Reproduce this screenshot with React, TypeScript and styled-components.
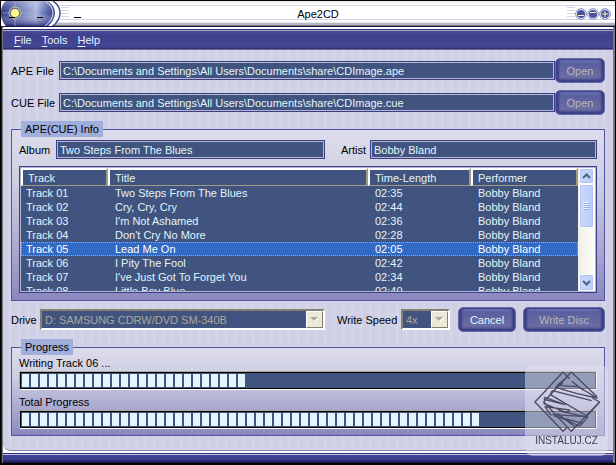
import React from "react";
import styled, { createGlobalStyle, css } from "styled-components";

const navy = "#3d3d8a";
const fieldBlue = "#40547f";
const paleText = "#e2f4fb";

const GlobalStyle = createGlobalStyle`
  * { box-sizing: border-box; }
  body { margin: 0; background: #000; }
  body, button, input, select, table {
    font-family: "Liberation Sans", Arial, sans-serif;
    font-size: 11px;
    line-height: 14px;
  }
`;

const Window = styled.div`
  min-height: 100vh;
  display: flex;
  flex-direction: column;
  border: solid #000;
  border-width: 1px 1px 2px;
  background: #17174f;
`;

const TitleBar = styled.header`
  display: grid;
  grid-template-columns: 1fr auto 1fr;
  align-items: center;
  height: 26px;
  border-bottom: 1px solid #17174f;
  background: linear-gradient(#eee 0 2px, #fff 2px 4px, #d5d5e6 4px 5px, #fff 5px 18px, #d5d5e6 18px 19px, #fff 19px 21px, #e4e4f0 21px 22px, #b8b8c0 22px 24px, #777 24px);
`;

const TitleLeft = styled.div`
  display: flex;
  align-items: center;
  height: 25px;
`;

const TitleText = styled.h1`
  margin: 0;
  padding-left: 20px;
  font-size: 11px;
  font-weight: 400;
  line-height: 14px;
  color: #000;
`;

const Grip = styled.div`
  width: 8px;
  height: 13px;
  background: repeating-linear-gradient(#d5d5e6 0 1px, #fff 1px 3px);
`;

const WindowButtons = styled.div`
  display: flex;
  justify-content: flex-end;
  align-items: center;
  padding-right: 4px;
`;

const WindowButton = styled.button`
  width: 12px;
  height: 12px;
  padding: 0;
  border: 0;
  background: none;
  svg { display: block; }
`;

const Frame = styled.div`
  flex: 1;
  display: flex;
  flex-direction: column;
  border: solid #777784;
  border-width: 0 2px 0 1px;
  margin-left: 1px;
  background: #fff;
`;

const MenuBar = styled.nav`
  display: flex;
  align-items: center;
  gap: 10px;
  height: 21px;
  margin-top: 2px;
  padding: 0 11px;
  border-top: 1px solid #2c2c7c;
  border-bottom: 1px solid #6a6a98;
  box-shadow: inset 0 1px #a7a7c4;
  background: linear-gradient(#4b4f9a, #40408c 5px, #434794 17px, #28286c);
`;

const MenuItem = styled.button`
  padding: 0;
  border: 0;
  background: none;
  color: #e4f2ff;
  u { text-underline-offset: 2px; }
`;

const Body = styled.main`
  flex: 1;
  display: flex;
  flex-direction: column;
  gap: 6px;
  padding: 8px 8px 14px;
  border-bottom: 1px solid #8a8aa8;
  border-radius: 0 0 0 8px;
  background: repeating-linear-gradient(90deg, #cfcfe5 0 4px, #d3d3e8 6px, #d7d7ea 8px, #cfcfe5 9px);
`;

const Paths = styled.div`
  display: flex;
  flex-direction: column;
  gap: 7px;
`;

const PathRow = styled.div`
  display: grid;
  grid-template-columns: 48px 1fr 50px;
  align-items: center;
`;

const Label = styled.label`
  white-space: nowrap;
  color: #000;
`;

const Field = styled.input`
  width: 100%;
  min-width: 0;
  height: 19px;
  padding: 0 3px;
  border: 1px solid ${navy};
  box-shadow: inset 0 0 0 1px #b5b5d0;
  background: ${fieldBlue};
  color: ${paleText};
  outline: 0;
`;

const PushButton = styled.button<{ $width: number }>`
  width: ${(p) => p.$width}px;
  height: 25px;
  padding: 0;
  border: 1px solid #6868a4;
  border-radius: 5px;
  color: ${paleText};
  background: linear-gradient(#7680bd, #5a5f9e 4px, #6b6da3 18px, #45478d);
  box-shadow: inset 3px 0 2px #3d4288, inset -3px 0 2px #3d4288, inset 0 -2px 2px #3c4088, inset 0 1px 1px #444a8c;
  &:disabled { color: #b8b8bc; }
`;

const Group = styled.fieldset<{ $top?: number }>`
  min-width: 0;
  margin: ${(p) => p.$top ?? 0}px 0 0;
  padding: 0 7px 7px;
  border: 1px solid #5254a2;
  background: linear-gradient(#dcdcea, #cfcfe4 30%, #a4a4ce 75%, #8888be);
`;

const Legend = styled.legend`
  height: 16px;
  margin-left: 2px;
  padding: 1px 4px;
  background: #a0aedb;
  color: #000;
`;

const InfoRow = styled.div`
  display: grid;
  grid-template-columns: 37px 269fr 45px 227fr;
  align-items: center;
  margin: 3px 0 7px;
  ${Label}:nth-of-type(2) { padding-left: 16px; }
`;

const List = styled.div`
  display: grid;
  grid-template-columns: 1fr 17px;
  height: 127px;
  border: 1px solid ${navy};
  background: ${fieldBlue};
  box-shadow: inset 0 0 0 1px #b5b5d0;
  padding: 1px;
`;

const Clip = styled.div`
  overflow: hidden;
`;

const Tracks = styled.table`
  width: 100%;
  table-layout: fixed;
  border-collapse: separate;
  border-spacing: 0;
  color: ${paleText};
  td { height: 14px; padding: 0 0 0 7px; line-height: 14px; }
  td:first-child { padding-left: 5px; }
`;

const Head = styled.th`
  height: 18px;
  padding: 0 0 0 5px;
  border: 2px solid;
  border-color: #fff #a09c84 #a09c84 #fff;
  border-bottom-width: 1px;
  text-align: left;
  font-weight: 400;
  line-height: 14px;
`;

const TrackRow = styled.tr<{ $selected: boolean }>`
  ${(p) => p.$selected && css`
    background: #316ac5;
    outline: 1px dotted #d6a83c;
    outline-offset: -1px;
    color: #fff;
  `}
`;

const ScrollTrack = styled.div`
  display: grid;
  grid-template-rows: 16px 44px 1fr 17px;
  padding: 0 1px;
  background: linear-gradient(90deg, #eeede5, #fefefb);
`;

const ScrollPart = styled.button`
  display: grid;
  place-items: center;
  padding: 0;
  border: 1px solid #fff;
  border-radius: 2px;
  background: linear-gradient(90deg, #cbd8fb, #b9ccf8);
  box-shadow: inset 0 0 0 1px #b3c5f0;
`;

const DriveRow = styled.div`
  display: grid;
  grid-template-columns: 29px 1fr 76px 49px auto;
  align-items: center;
`;

const SpeedLabel = styled(Label)`
  padding-left: 12px;
`;

const SelectBox = styled.div`
  display: grid;
  grid-template-columns: 1fr 17px;
  min-width: 0;
  height: 21px;
  border: 2px solid;
  border-color: #85816f #fff #fff #85816f;
  background: ${fieldBlue};
`;

const Select = styled.select`
  appearance: none;
  min-width: 0;
  padding: 0 3px;
  border: 0;
  background: transparent;
  &:disabled { color: #aca899; opacity: 1; }
`;

const SelectArrow = styled.span`
  display: grid;
  place-items: center;
  border: 1px solid;
  border-color: #fff #85816f #85816f #fff;
  background: #ece9d8;
`;

const Actions = styled.div`
  display: flex;
  gap: 7px;
  margin-left: 8px;
`;

const ProgressText = styled.div`
  height: 14px;
  margin: 1px 0 2px;
  color: #000;
  & ~ & { margin: 6px 0 2px; }
`;

const Bar = styled.div`
  display: flex;
  gap: 2px;
  height: 17px;
  padding: 1px;
  overflow: hidden;
  border: 1px solid #000;
  box-shadow: 0 -1px #aca899, -1px 0 #aca899, 0 1px #fff, 1px 0 #fff;
  margin: 0 1px;
  background: ${fieldBlue};
`;

const Chunk = styled.i`
  flex: 0 0 7px;
  background: #e4f4fd;
`;

const Footer = styled.footer`
  height: 12px;
  border-top: 2px solid #fff;
  background: linear-gradient(#2f2f80 0 1px, #c2c2dc 1px 2px, #42429a 2px, #3a3a8a 7px, #17174f 9px);
`;

const Watermark = styled.div`
  position: fixed;
  right: 8px;
  bottom: 9px;
  width: 83px;
  height: 91px;
  display: flex;
  flex-direction: column;
  align-items: center;
  border-radius: 8px;
  background: rgba(225, 225, 240, 0.52);
  font: 10px/14px "Liberation Sans", sans-serif;
  color: #3c3c50;
  svg { display: block; margin: 5px 0 1px; }
`;

const tracks = [
  ["Track 01", "Two Steps From The Blues", "02:35"],
  ["Track 02", "Cry, Cry, Cry", "02:44"],
  ["Track 03", "I'm Not Ashamed", "02:36"],
  ["Track 04", "Don't Cry No More", "02:28"],
  ["Track 05", "Lead Me On", "02:05"],
  ["Track 06", "I Pity The Fool", "02:42"],
  ["Track 07", "I've Just Got To Forget You", "02:34"],
  ["Track 08", "Little Boy Blue", "02:40"],
];

const Emblem = () => (
  <svg width="80" height="25" viewBox="0 0 80 25" aria-hidden="true">
    <defs>
      <linearGradient id="orb" x1="0" x2="1">
        <stop offset="0" stopColor="#27307f" />
        <stop offset=".25" stopColor="#5060a8" />
        <stop offset=".65" stopColor="#a9b2dc" />
        <stop offset=".85" stopColor="#5361a8" />
        <stop offset="1" stopColor="#2d3484" />
      </linearGradient>
      <linearGradient id="orbShade" x1="0" y1="0" x2="0" y2="1">
        <stop offset="0" stopColor="#fff" stopOpacity=".3" />
        <stop offset=".5" stopColor="#fff" stopOpacity="0" />
        <stop offset="1" stopColor="#1d1f6c" stopOpacity=".8" />
      </linearGradient>
    </defs>
    <path d="M0 0H50Q60 4 60 12T50 25H0Z" fill="#fff" />
    <path d="M52 0Q59 5 59 12T52 25" fill="none" stroke="#3c4690" strokeWidth="1.4" />
    <path d="M5 0H47Q54 5 54 12T47 25H5Q0 20 0 12T5 0Z" fill="url(#orb)" />
    <path d="M5 0H47Q54 5 54 12T47 25H5Q0 20 0 12T5 0Z" fill="url(#orbShade)" />
    <path d="M44 0Q52 5 52 12T44 25" fill="none" stroke="#e8ebf8" />
    <path d="M14 0V25M1 12H29" stroke="#a8b3df" strokeWidth="1" opacity=".7" />
    <circle cx="14" cy="12" r="6" fill="#6d7299" stroke="#c9c68f" />
    <circle cx="14" cy="12" r="4" fill="#fff48e" />
    <path d="M8 16.5h6M36 16.5h6M73 16.5h7" stroke="#000" />
    <path d="M60 6.500h8M60 9.500h8M60 12.500h8M60 15.500h8" stroke="#d5d5e6" />
  </svg>
);

const WinIcon = ({ d }: { d: string }) => (
  <svg width="12" height="12" viewBox="0 0 12 12">
    <circle cx="6" cy="6" r="5.300" fill="#fff" stroke="#7c84b8" />
    <circle cx="6" cy="6" r="4" fill="#4650a0" />
    <path d={d} stroke="#fff7a0" />
  </svg>
);

const Down = () => (
  <svg width="9" height="5" viewBox="0 0 9 5">
    <path d="M1 1h8L5 5Z" fill="#fff" />
    <path d="M0 0h8L4 4Z" fill="#aca899" />
  </svg>
);

const Chevron = ({ up }: { up?: boolean }) => (
  <svg width="9" height="6" viewBox="0 0 9 6">
    <path d={up ? "M1 5L4.500 1.500L8 5" : "M1 1L4.500 4.500L8 1"} fill="none" stroke="#4d6185" strokeWidth="2" />
  </svg>
);

const chunks = (n: number) => Array.from({ length: n }, (_, i) => <Chunk key={i} />);

export default function App() {
  return (
    <Window>
      <GlobalStyle />
      <TitleBar>
        <TitleLeft><Emblem /></TitleLeft>
        <TitleText>Ape2CD</TitleText>
        <WindowButtons>
          <Grip />
          <WindowButton aria-label="Minimize"><WinIcon d="M3 7.500h6" /></WindowButton>
          <WindowButton aria-label="Roll up"><WinIcon d="M3 4.500h6" /></WindowButton>
          <WindowButton aria-label="Maximize"><WinIcon d="M3 6h6M6 3v6" /></WindowButton>
        </WindowButtons>
      </TitleBar>
      <Frame>
        <MenuBar>
          <MenuItem><u>F</u>ile</MenuItem>
          <MenuItem><u>T</u>ools</MenuItem>
          <MenuItem><u>H</u>elp</MenuItem>
        </MenuBar>
        <Body>
          <Paths>
            <PathRow>
              <Label htmlFor="ape">APE File</Label>
              <Field id="ape" readOnly value="C:\Documents and Settings\All Users\Documents\share\CDImage.ape" />
              <PushButton $width={50} disabled>Open</PushButton>
            </PathRow>
            <PathRow>
              <Label htmlFor="cue">CUE File</Label>
              <Field id="cue" readOnly value="C:\Documents and Settings\All Users\Documents\share\CDImage.cue" />
              <PushButton $width={50} disabled>Open</PushButton>
            </PathRow>
          </Paths>
          <Group>
            <Legend>APE(CUE) Info</Legend>
            <InfoRow>
              <Label htmlFor="album">Album</Label>
              <Field id="album" readOnly value="Two Steps From The Blues" />
              <Label htmlFor="artist">Artist</Label>
              <Field id="artist" readOnly value="Bobby Bland" />
            </InfoRow>
            <List>
              <Clip>
                <Tracks>
                  <colgroup>
                    <col width="87" />
                    <col />
                    <col width="103" />
                    <col width="107" />
                  </colgroup>
                  <thead>
                    <tr>
                      <Head>Track</Head>
                      <Head>Title</Head>
                      <Head>Time-Length</Head>
                      <Head>Performer</Head>
                    </tr>
                  </thead>
                  <tbody>
                    {tracks.map(([id, title, time]) => (
                      <TrackRow key={id} $selected={id === "Track 05"}>
                        <td>{id}</td>
                        <td>{title}</td>
                        <td>{time}</td>
                        <td>Bobby Bland</td>
                      </TrackRow>
                    ))}
                  </tbody>
                </Tracks>
              </Clip>
              <ScrollTrack>
                <ScrollPart aria-label="Scroll up"><Chevron up /></ScrollPart>
                <ScrollPart aria-label="Scroll thumb">
                  <svg width="7" height="8" viewBox="0 0 7 8">
                    <path d="M0 .5h6M0 2.500h6M0 4.500h6M0 6.500h6" stroke="#eef4fe" />
                    <path d="M1 1.500h6M1 3.500h6M1 5.500h6M1 7.500h6" stroke="#8cb0f8" />
                  </svg>
                </ScrollPart>
                <span />
                <ScrollPart aria-label="Scroll down"><Chevron /></ScrollPart>
              </ScrollTrack>
            </List>
          </Group>
          <DriveRow>
            <Label htmlFor="drive">Drive</Label>
            <SelectBox>
              <Select id="drive" disabled><option>D: SAMSUNG CDRW/DVD SM-340B</option></Select>
              <SelectArrow><Down /></SelectArrow>
            </SelectBox>
            <SpeedLabel htmlFor="speed">Write Speed</SpeedLabel>
            <SelectBox>
              <Select id="speed" disabled><option>4x</option></Select>
              <SelectArrow><Down /></SelectArrow>
            </SelectBox>
            <Actions>
              <PushButton $width={58}>Cancel</PushButton>
              <PushButton $width={82} disabled>Write Disc</PushButton>
            </Actions>
          </DriveRow>
          <Group $top={1}>
            <Legend>Progress</Legend>
            <ProgressText>Writing Track 06 ...</ProgressText>
            <Bar role="progressbar" aria-label="Track progress" aria-valuenow={39}>{chunks(25)}</Bar>
            <ProgressText>Total Progress</ProgressText>
            <Bar role="progressbar" aria-label="Total progress" aria-valuenow={80}>{chunks(51)}</Bar>
          </Group>
        </Body>
        <Footer />
      </Frame>
      <Watermark>
        <svg width="68" height="63" viewBox="0 0 204 189" fill="none" stroke="#4a4a62" strokeWidth="4" strokeLinejoin="round">
          <path d="M90 6L6 96L90 184L104 170M90 6L110 26M115 6L32 96L115 184L200 96L178 84M115 6L192 80" />
          <path d="M90 40L68 52L130 70L192 84L136 50L72 46L100 24M116 34L150 60" />
          <path d="M176 92L58 62L52 74L162 138L198 98" />
          <path d="M36 82L96 104L34 88ZM32 100L100 128L110 120L36 110L52 134L164 140" />
          <path d="M64 138L150 160M72 130L128 172M78 122L164 142L140 168L66 136" />
        </svg>
        INSTALUJ.CZ
      </Watermark>
    </Window>
  );
}
